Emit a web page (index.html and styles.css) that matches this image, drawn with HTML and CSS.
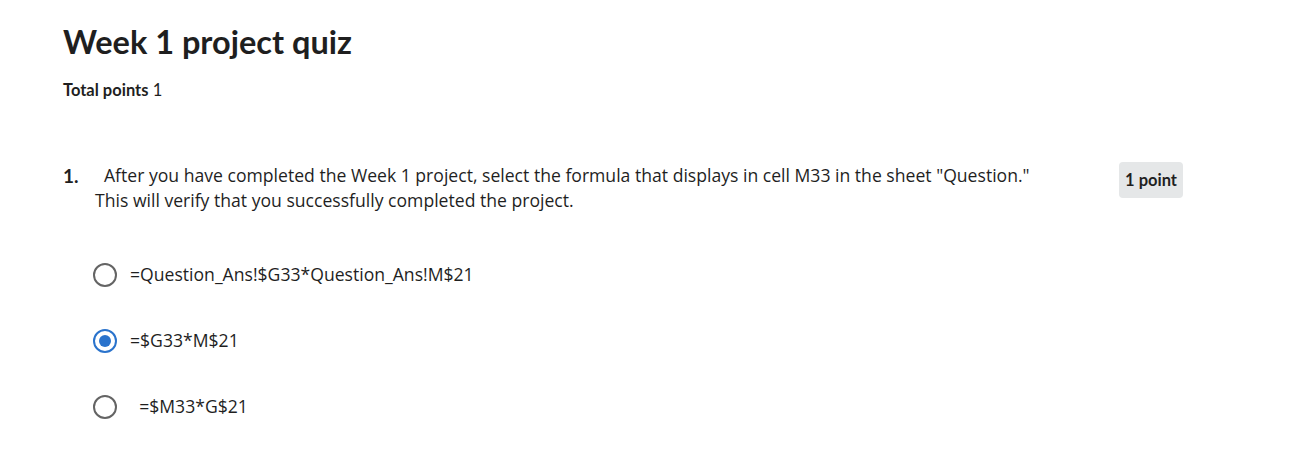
FILE: index.html
```html
<!DOCTYPE html>
<html>
<head>
<meta charset="utf-8">
<link rel="stylesheet" href="styles.css">
</head>
<body>
<main class="page">
  <h1 class="title">Week 1 project quiz</h1>
  <p class="total"><strong>Total points</strong> 1</p>
  <section class="question">
    <div class="q-head">
      <div class="q-text">
        <span class="q-num">1.</span>
        <p class="q-body">After you have completed the Week 1 project, select the formula that displays in cell M33 in the sheet "Question." This will verify that you successfully completed the project.</p>
      </div>
      <span class="badge">1 point</span>
    </div>
    <div class="options">
      <label class="option"><span class="radio"></span><span class="opt-text">=Question_Ans!$G33*Question_Ans!M$21</span></label>
      <label class="option"><span class="radio checked"></span><span class="opt-text">=$G33*M$21</span></label>
      <label class="option"><span class="radio"></span><span class="opt-text">&nbsp; =$M33*G$21</span></label>
    </div>
  </section>
</main>
</body>
</html>
```
FILE: styles.css
```css
html, body { margin: 0; padding: 0; background: #fff; }
body { font-family: "Open Sans", "Noto Sans", sans-serif; color: #1f1f1f; }
.page { padding: 20px 0 0 63px; width: 1120px; }
.title { font-family: "Lato", "Noto Sans", sans-serif; font-weight: 700; font-size: 32.5px; line-height: 44px; margin: 0; color: #1f1f1f; }
.total { font-family: "Lato", "Noto Sans", sans-serif; font-size: 16.5px; margin: 16px 0 0; line-height: 20px; }
.total strong { font-weight: 700; }
.question { margin-top: 63px; }
.q-head { display: flex; justify-content: space-between; align-items: flex-start; }
.q-text { display: flex; font-size: 17.6px; line-height: 25px; width: 990px; }
.q-num { font-family: "Lato", sans-serif; font-weight: 700; font-size: 19px; flex: 0 0 32px; }
.q-body { margin: 0; text-indent: 9px; width: 950px; }
.badge { font-family: "Lato", sans-serif; font-weight: 700; font-size: 16.5px; background: #e5e7e8; border-radius: 4px; padding: 8px 6px; line-height: 20px; margin-top: -1px; }
.options { display: flex; flex-direction: column; gap: 41px; margin-top: 49px; padding-left: 30px; }
.option { display: flex; align-items: center; gap: 13px; font-size: 17.6px; line-height: 25px; }
.radio { width: 20px; height: 20px; border: 2px solid #646464; border-radius: 50%; box-sizing: content-box; position: relative; }
.radio.checked { border-color: #2a73cc; }
.radio.checked::after { content: ""; position: absolute; left: 4px; top: 4px; width: 12px; height: 12px; border-radius: 50%; background: #2a73cc; }
```
